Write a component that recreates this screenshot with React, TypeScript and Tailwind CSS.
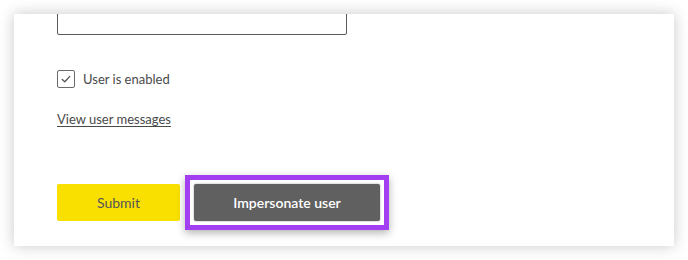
export default function App() {
  return (
    <main className="w-[688px] h-[260px] bg-white p-[14px] font-['Lato','Noto_Sans',sans-serif]">
      <div className="h-[232px] w-[660px] bg-white overflow-hidden shadow-[0_0_14px_rgba(0,0,0,0.22)] pl-[43px]">
        <div className="mt-[-19px] h-[40px] w-[290px] rounded-[2px] border border-[#5a5a5a]" />

        <label className="mt-[35px] flex h-[18px] items-center gap-[8px] text-[13px] leading-[16px] text-[#4a4a4a]">
          <span className="flex h-[18px] w-[18px] items-center justify-center rounded-[2px] border border-[#6a6a6a]">
            <svg width="12" height="12" viewBox="0 0 12 12" fill="none">
              <path d="M2.2 6.4 4.8 8.8 9.8 3.4" stroke="#555" strokeWidth="1.3" strokeLinecap="round" strokeLinejoin="round" />
            </svg>
          </span>
          User is enabled
        </label>

        <a href="#" className="mt-[23px] block w-fit text-[13px] leading-[16px] text-[#4a4a4a] underline underline-offset-[2px]">
          View user messages
        </a>

        <div className="mt-[48px] flex items-center gap-[5px]">
          <button className="h-[37px] w-[123px] rounded-[2px] bg-[#f9e000] text-[14px] text-[#555]">Submit</button>
          <div className="border-[5px] border-[#a23ff0] bg-white p-[4px] shadow-[0_3px_8px_rgba(0,0,0,0.3)]">
            <button className="block h-[37px] w-[186px] rounded-[2px] bg-[#606060] text-[14px] font-semibold text-white shadow-[0_0_2px_rgba(0,0,0,0.4)]">
              Impersonate user
            </button>
          </div>
        </div>
      </div>
    </main>
  );
}
